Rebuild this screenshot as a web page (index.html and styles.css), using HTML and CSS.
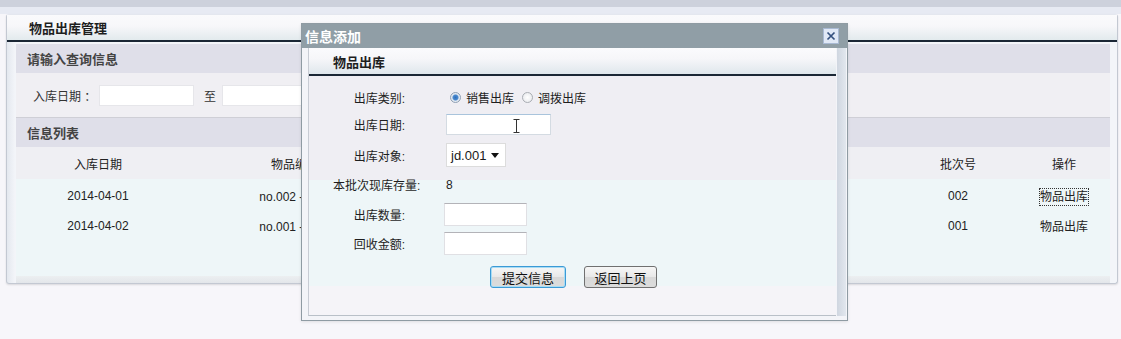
FILE: index.html
```html
<!DOCTYPE html>
<html lang="zh-CN">
<head>
<meta charset="utf-8">
<title>物品出库管理</title>
<link rel="stylesheet" href="styles.css">
</head>
<body>
<div class="topbar"></div>
<div class="topbar2"></div>

<div class="panel">
  <div class="panel-head">物品出库管理</div>
  <div class="panel-body">
    <div class="sec-title">请输入查询信息</div>
    <div class="search">
      <span class="search-label">入库日期 ：</span>
      <input class="search-input" type="text">
      <span class="search-to">至</span>
      <input class="search-input" type="text">
    </div>
    <div class="sec-title">信息列表</div>
    <div class="grid grid-head">
      <div>入库日期</div>
      <div>物品编号</div>
      <div>物品名称</div>
      <div>入库数量</div>
      <div>批次号</div>
      <div>操作</div>
    </div>
    <div class="grid grid-row">
      <div>2014-04-01</div>
      <div>no.002 - 手机</div>
      <div>手机</div>
      <div>10</div>
      <div>002</div>
      <div><span class="op focus">物品出库</span></div>
    </div>
    <div class="grid grid-row">
      <div>2014-04-02</div>
      <div>no.001 - 电脑</div>
      <div>电脑</div>
      <div>5</div>
      <div>001</div>
      <div><span class="op">物品出库</span></div>
    </div>
    <div class="grid-filler"></div>
    <div class="grid-foot"></div>
  </div>
</div>

<div class="dialog">
  <div class="dialog-title">
    <span>信息添加</span>
    <span class="close">
      <svg width="10" height="10" viewBox="0 0 10 10"><path d="M1.5 1.5 L8.5 8.5 M8.5 1.5 L1.5 8.5" stroke="#34507e" stroke-width="1.7" fill="none"/></svg>
    </span>
  </div>
  <div class="dialog-body">
    <div class="inner">
      <div class="inner-head">物品出库</div>
      <div class="form-area">
        <div class="form">
          <div class="lbl">出库类别:</div>
          <div class="val radios">
            <span class="radio checked"></span><span class="rtext">销售出库</span>
            <span class="radio"></span><span class="rtext">调拨出库</span>
          </div>

          <div class="lbl">出库日期:</div>
          <div class="val">
            <span class="date-wrap">
              <input class="date-input" type="text">
              <svg class="ibeam" width="7" height="14" viewBox="0 0 7 14"><path d="M0.5 0.5 H6.5 M3.5 0.5 V13.5 M0.5 13.5 H6.5" stroke="#333" stroke-width="1" fill="none"/></svg>
            </span>
          </div>

          <div class="lbl">出库对象:</div>
          <div class="val">
            <span class="select">jd.001<svg width="8" height="5" viewBox="0 0 8 5"><path d="M0 0 H8 L4 5 Z" fill="#111"/></svg></span>
          </div>

          <div class="lbl lbl-wide">本批次现库存量:</div>
          <div class="val val-num">8</div>

          <div class="lbl">出库数量:</div>
          <div class="val"><input class="num-input" type="text"></div>

          <div class="lbl">回收金额:</div>
          <div class="val"><input class="num-input" type="text"></div>
        </div>
        <div class="buttons">
          <button class="btn btn-primary" type="button">提交信息</button>
          <button class="btn" type="button">返回上页</button>
        </div>
      </div>
    </div>
    <div class="vstrip"></div>
  </div>
</div>
</body>
</html>
```

FILE: styles.css
```css
* { box-sizing: border-box; }

body {
  margin: 0;
  background: #f7f6fa;
  font-family: "Liberation Sans", "Noto Sans CJK SC", sans-serif;
  font-size: 12px;
  color: #1e1e1e;
  position: relative;
  height: 339px;
  overflow: hidden;
}

.topbar { height: 7px; background: #cdd1dc; }
.topbar2 { height: 7px; background: #e7eaf3; }

.panel {
  margin: 0 3px 0 6px;
  border: 1px solid #c3c8d2;
  border-top-color: #e4e7ef;
  border-radius: 3px;
  background: linear-gradient(to right, #e4e8ef, #f3f5f9 8px);
  box-shadow: 0 1px 2px rgba(0, 0, 0, 0.12);
}

.panel-head {
  height: 27px;
  padding-left: 22px;
  display: flex;
  align-items: center;
  font-size: 13px;
  font-weight: bold;
  color: #1e1e1e;
  background: linear-gradient(to bottom, #fafafc 0, #f7f7fa 11px, #e1e9ec 26px);
  border-bottom: 2px solid #1b2735;
}

.panel-body {
  padding: 2px 7px 0 9px;
}

.sec-title {
  height: 29px;
  padding-left: 11px;
  display: flex;
  align-items: center;
  background: #dfdfe9;
  font-size: 13px;
  font-weight: bold;
  color: #444;
}

.search {
  height: 45px;
  background: #f0eff3;
  border-bottom: 1px solid #cfcfd6;
  display: flex;
  align-items: center;
  padding-left: 17px;
  color: #333;
}
.search-label { width: 66px; }
.search-input {
  width: 95px;
  height: 21px;
  border: 1px solid #e6e6ea;
  background: #fff;
  margin: 0;
}
.search-to { margin: 0 6px 0 10px; }

.grid {
  display: grid;
  grid-template-columns: 164px 230px 220px 266px 124px 88px 1fr;
  align-items: center;
  text-align: center;
}
.grid-head {
  height: 32px;
  background: #efeff3;
  color: #222;
}
.grid-row {
  height: 30px;
  padding-top: 3px;
  background: #eef6f8;
  color: #222;
}
.grid-filler { height: 37px; background: #eef6f8; }
.grid-foot {
  height: 7px;
  background: linear-gradient(to bottom, #eceff1, #e3e6ea);
}

.op { padding: 1px 0; }
.op.focus { outline: 1px dotted #333; outline-offset: 0; }

/* Dialog */
.dialog {
  position: absolute;
  left: 301px;
  top: 23px;
  width: 547px;
  height: 298px;
  border: 1px solid #8f9ba3;
  background: #f3f4f8;
  box-shadow: 0 1px 3px rgba(0, 0, 0, 0.1);
}
.dialog-title {
  height: 24px;
  background: #909ea6;
  color: #fff;
  font-size: 14px;
  font-weight: bold;
  display: flex;
  align-items: center;
  justify-content: space-between;
  padding: 0 8px 0 3px;
}
.close {
  width: 16px;
  height: 16px;
  border: 1px solid #a8b9d3;
  background: #e0e8f6;
  display: flex;
  align-items: center;
  justify-content: center;
}

.dialog-body {
  display: flex;
  padding: 0 1px 4px 6px;
  height: 272px;
}
.inner {
  width: 528px;
  border-left: 1px solid #c8ccd4;
  border-bottom: 1px solid #b9c0c8;
  display: flex;
  flex-direction: column;
}
.vstrip {
  width: 9px;
  margin-left: 1px;
  background: linear-gradient(to right, #cfd6e0, #e2e7ee);
}
.inner-head {
  height: 28px;
  padding-left: 24px;
  display: flex;
  align-items: center;
  font-size: 13px;
  font-weight: bold;
  color: #1e1e1e;
  background: linear-gradient(to bottom, #fbfbfd 0, #f6f6f9 11px, #dfe7ec 26px);
  border-bottom: 2px solid #1b2735;
}
.form-area {
  flex: 1;
  padding-top: 8px;
  background: linear-gradient(to bottom, #efeef3 0, #efeef3 104px, #eef6f8 104px, #eef6f8 210px, #f5f4f8 210px);
}

.form {
  display: grid;
  grid-template-columns: 96px 1fr;
  grid-template-rows: 26px 28px 34px 24px 36px 22px;
  column-gap: 41px;
  align-items: center;
}
.lbl {
  text-align: right;
  white-space: nowrap;
  color: #1e1e1e;
}
.lbl-wide {
  justify-self: start;
  margin-left: 24px;
}
.val { display: flex; align-items: center; }
.val-num { padding-top: 1px; }

.radios { padding-left: 4px; }
.radio {
  width: 11px;
  height: 11px;
  border-radius: 50%;
  border: 1px solid #a9adb3;
  background: radial-gradient(circle, #ffffff 0, #e4e6ea 100%);
  display: inline-block;
}
.radio.checked {
  border-color: #8e9fb3;
  background: radial-gradient(circle, #2f6fb8 0, #4b8ad0 2.5px, #dfe6ef 3.5px, #f4f6f9 100%);
}
.rtext { margin: 0 8px 0 5px; }

.date-wrap { position: relative; display: inline-block; }
.date-input {
  width: 105px;
  height: 21px;
  margin: 0;
  border: 1px solid #d4dbe2;
  border-top-color: #a9c4dc;
  background: #fff;
}
.ibeam { position: absolute; left: 67px; top: 5px; }

.select {
  width: 60px;
  height: 24px;
  border: 1px solid #dcdcdc;
  background: #fff;
  display: flex;
  align-items: center;
  justify-content: space-between;
  padding: 0 6px 0 4px;
  font-size: 13px;
  color: #1a1a1a;
}

.num-input {
  width: 83px;
  height: 23px;
  margin: 0 0 0 -2px;
  border: 1px solid #e0e0e4;
  border-top-color: #b3b3b8;
  background: #fff;
}

.buttons {
  height: 46px;
  display: flex;
  align-items: center;
  justify-content: center;
  gap: 18px;
  padding-left: 2px;
}
.btn {
  height: 22px;
  width: 73px;
  margin: 0;
  padding: 0;
  font-family: "Liberation Sans", "Noto Sans CJK SC", sans-serif;
  font-size: 13px;
  color: #111;
  border: 1px solid #707070;
  border-radius: 3px;
  background: linear-gradient(to bottom, #f6f6f6 0, #e8e8e8 50%, #d8d8d8 51%, #dcdcdc 100%);
}
.btn-primary {
  width: 76px;
  border-color: #3c9ad6;
  box-shadow: inset 0 0 0 1px #a8dcf4;
}
```
